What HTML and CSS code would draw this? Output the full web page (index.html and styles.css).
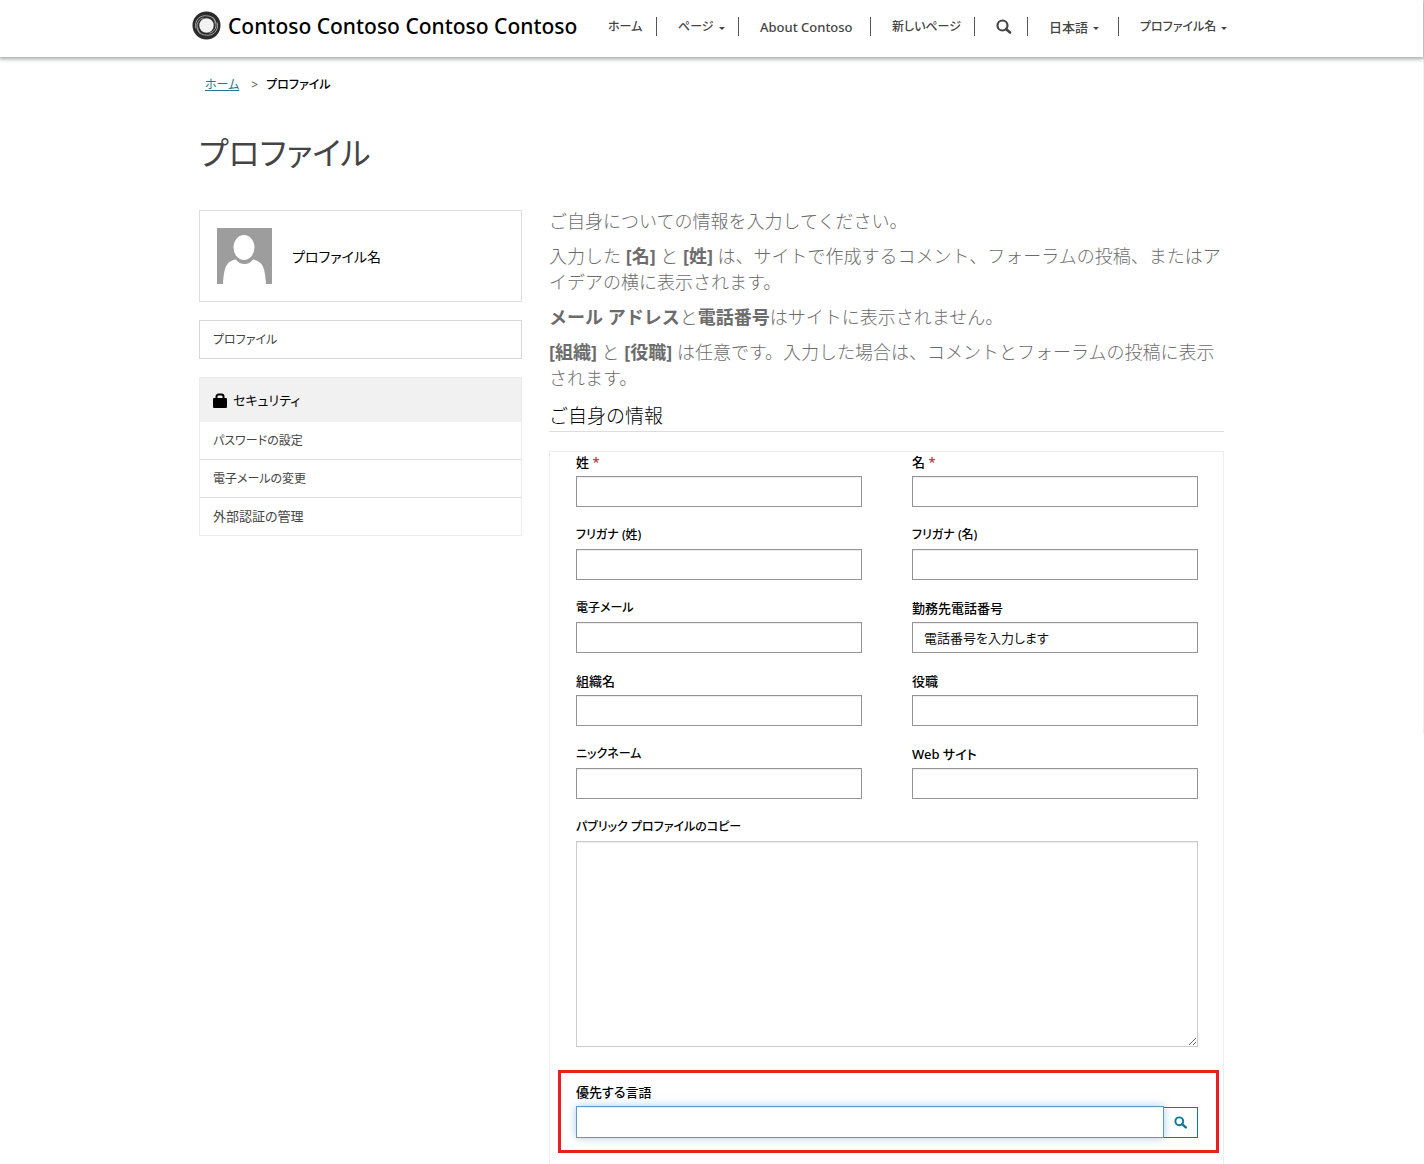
FILE: index.html
```html
<!DOCTYPE html>
<html lang="ja">
<head>
<meta charset="utf-8">
<meta name="viewport" content="width=device-width, initial-scale=1">
<title>プロファイル</title>
<link rel="stylesheet" href="styles.css">
</head>
<body>
<header class="site-header">
  <div class="header-inner">
    <a class="brand" href="#">
      <svg class="logo" viewBox="0 0 30 30" aria-hidden="true">
        <circle cx="15" cy="15" r="11" fill="#f2f2f2" stroke="#2b2b2b" stroke-width="7"/>
        <g fill="none" stroke="#a8a8a8" stroke-width="1">
          <path d="M4 18C2 9 9 4 15 5c5 0 9 3 9 8"/>
          <path d="M26 12c2 9-5 14-11 13-5 0-9-3-9-8"/>
          <path d="M9 24C3 19 4 9 12 7"/>
          <path d="M21 6c6 5 5 15-3 17"/>
        </g>
      </svg>
      <span>Contoso Contoso Contoso Contoso</span>
    </a>
    <nav aria-label="メイン">
      <ul class="nav">
        <li><a class="kana" href="#">ホーム</a></li>
        <li><a class="kana" href="#">ページ<span class="caret"></span></a></li>
        <li><a href="#">About Contoso</a></li>
        <li><a class="kana" href="#">新しいページ</a></li>
        <li><a href="#" aria-label="検索"><svg class="icon-search" viewBox="0 0 16 16" aria-hidden="true"><circle cx="6.5" cy="6.5" r="5" fill="none" stroke="currentColor" stroke-width="2.2"/><path d="M10 10l4 3.500" stroke="currentColor" stroke-width="2.600" stroke-linecap="round"/></svg></a></li>
        <li><a href="#">日本語<span class="caret"></span></a></li>
        <li><a class="kana" href="#">プロファイル名<span class="caret"></span></a></li>
      </ul>
    </nav>
  </div>
</header>

<div class="container">
  <nav class="breadcrumb kana" aria-label="パンくず">
    <a href="#">ホーム</a><span class="sep">&gt;</span><span>プロファイル</span>
  </nav>
  <h1>プロファイル</h1>

  <div class="columns">
    <aside class="sidebar">
      <div class="profile-card">
        <svg class="avatar" viewBox="0 0 55 56" aria-hidden="true">
          <rect width="55" height="56" fill="#9d9d9d"/>
          <path d="M6 56C7 40 9 33 19 31.500c4 6 13 6 17 0C46 33 48 40 49 56z" fill="#fff"/>
          <ellipse cx="27" cy="19.500" rx="11.500" ry="13.500" fill="#9d9d9d"/>
          <ellipse cx="27" cy="19.500" rx="10.500" ry="12.500" fill="#fff"/>
        </svg>
        <span>プロファイル名</span>
      </div>
      <a class="card-link kana" href="#">プロファイル</a>
      <section class="security">
        <h2><svg class="icon-lock" viewBox="0 0 14 15" aria-hidden="true"><path d="M3.500 7V3.500a2 2 0 0 1 2-2h3a2 2 0 0 1 2 2V7" fill="none" stroke="#000" stroke-width="2"/><rect y="5" width="14" height="10" rx="1" fill="#000"/></svg>セキュリティ</h2>
        <a class="kana" href="#">パスワードの設定</a>
        <a class="kana" href="#">電子メールの変更</a>
        <a href="#">外部認証の管理</a>
      </section>
    </aside>

    <main class="content">
      <div class="intro">
        <p>ご自身についての情報を入力してください。</p>
        <p>入力した <b>[名]</b> と <b>[姓]</b> は、サイトで作成するコメント、フォーラムの投稿、またはアイデアの横に表示されます。</p>
        <p><b>メール アドレス</b>と<b>電話番号</b>はサイトに表示されません。</p>
        <p><b>[組織]</b> と <b>[役職]</b> は任意です。入力した場合は、コメントとフォーラムの投稿に表示されます。</p>
      </div>
      <h2 class="form-title">ご自身の情報</h2>
      <form class="panel">
        <div class="fields">
          <div class="field"><label for="last">姓 <span class="req">*</span></label><input id="last" type="text"></div>
          <div class="field"><label for="first">名 <span class="req">*</span></label><input id="first" type="text"></div>
          <div class="field"><label class="kana" for="last-kana">フリガナ (姓)</label><input id="last-kana" type="text"></div>
          <div class="field"><label class="kana" for="first-kana">フリガナ (名)</label><input id="first-kana" type="text"></div>
          <div class="field"><label class="kana" for="email">電子メール</label><input id="email" type="email"></div>
          <div class="field"><label for="phone">勤務先電話番号</label><input id="phone" type="tel" placeholder="電話番号を入力します"></div>
          <div class="field"><label for="org">組織名</label><input id="org" type="text"></div>
          <div class="field"><label for="role">役職</label><input id="role" type="text"></div>
          <div class="field"><label class="kana" for="nick">ニックネーム</label><input id="nick" type="text"></div>
          <div class="field"><label for="web">Web サイト</label><input id="web" type="url"></div>
          <div class="field wide"><label class="kana" for="bio">パブリック プロファイルのコピー</label><textarea id="bio"></textarea></div>
        </div>
        <div class="highlight">
          <label for="language">優先する言語</label>
          <div class="lookup">
            <input id="language" type="text">
            <button type="button" aria-label="検索"><svg class="icon-small" viewBox="0 0 16 16" aria-hidden="true"><circle cx="6.500" cy="6.500" r="4.800" fill="none" stroke="currentColor" stroke-width="2.400"/><path d="M10 10l4.500 4" stroke="currentColor" stroke-width="3" stroke-linecap="round"/></svg></button>
          </div>
        </div>
      </form>
    </main>
  </div>
</div>
</body>
</html>
```
FILE: styles.css
```css
* { box-sizing: border-box; }

body {
  margin: 0;
  padding-right: 1px;
  min-height: 100vh;
  display: flex;
  flex-direction: column;
  background: linear-gradient(#efefef, #efefef) right top / 1px 734px no-repeat #fff;
  color: #000;
  font-family: "Noto Sans", "Noto Sans CJK JP", sans-serif;
  font-size: 13px;
  line-height: 20px;
  font-feature-settings: "palt";
}

a { color: inherit; text-decoration: none; }

/* Katakana-heavy labels are set one step smaller */
.kana { font-size: 12px; }

.site-header {
  height: 57px;
  background: #fff;
  box-shadow: 0 1px 4px 1px rgba(50, 60, 55, 0.45);
}

.header-inner {
  max-width: 1039px;
  margin: 0 auto;
  padding: 0 5px 6px 0;
  height: 100%;
  display: flex;
  align-items: center;
  justify-content: space-between;
}

.brand {
  display: flex;
  align-items: center;
  gap: 7px;
  font-size: 21px;
  font-weight: 500;
  line-height: 30px;
  white-space: nowrap;
}

.logo { width: 29px; height: 29px; flex: none; }

.nav {
  margin: 0;
  padding: 2px 0 0;
  list-style: none;
  display: grid;
  grid-template-columns: 70px 82px 132px 104px 53px 91px 107px;
  color: #444;
  font-weight: 500;
  white-space: nowrap;
}

.nav li {
  height: 19px;
  padding-left: 21px;
  border-right: 1px solid #555;
}

.nav li:last-child { border-right: 0; }
.nav a { display: flex; align-items: center; height: 19px; }

.caret {
  margin: 3px 0 0 5px;
  border: 3px solid transparent;
  border-top-color: currentColor;
  border-bottom: 0;
}

.icon-search { width: 16px; height: 16px; }

.container {
  width: 100%;
  max-width: 1025px;
  margin: 0 auto;
  flex: 1;
  display: flex;
  flex-direction: column;
}

.breadcrumb { display: flex; margin: 18px 0 0 6px; font-weight: 500; }
.breadcrumb a { color: #1c7a94; font-weight: 400; text-decoration: underline; }
.sep { margin: 0 8px 0 12px; color: #555; font-weight: 400; }

h1 {
  margin: 33px 0;
  color: #444;
  font-size: 32px;
  line-height: 50px;
  font-weight: 400;
}

.columns {
  flex: 1;
  display: grid;
  grid-template-columns: 323fr 675fr;
  gap: 27px;
}

.sidebar { color: #444; line-height: 19px; margin-top: -1px; }

.profile-card {
  display: flex;
  align-items: center;
  gap: 20px;
  height: 92px;
  padding: 0 17px;
  border: 1px solid #ddd;
  color: #000;
  font-size: 14px;
}

.avatar { width: 55px; height: 56px; }

.card-link {
  display: block;
  margin: 18px 0;
  padding: 9px 13px;
  border: 1px solid #d8d8d8;
}

.security { border: 1px solid #ececec; }

.security h2 {
  display: flex;
  align-items: center;
  gap: 6px;
  margin: 0;
  padding: 0 13px;
  height: 44px;
  background: #f1f1f1;
  color: #000;
  font-size: 13px;
  font-weight: 400;
}

.icon-lock { width: 14px; height: 15px; }
.security a { display: block; padding: 9px 13px; }
.security a + a { border-top: 1px solid #ddd; }

.content { display: flex; flex-direction: column; }

.intro {
  margin-top: -3px;
  color: #6c6c6c;
  font-size: 18px;
  line-height: 26px;
  font-weight: 300;
  font-feature-settings: normal;
  line-break: strict;
}

.intro p { margin: 0 0 9px; }
.intro b { font-weight: 700; }

.form-title {
  margin: 0 0 19px;
  padding-top: 2px;
  border-bottom: 1px solid #ddd;
  font-size: 19px;
  line-height: 29px;
  font-weight: 300;
  font-feature-settings: normal;
}

.panel {
  flex: 1;
  padding: 0 25px 11px 26px;
  border: 1px solid #eee;
  border-bottom: 0;
}

.fields { display: grid; grid-template-columns: 1fr 1fr; gap: 18px 50px; }
.field { display: flex; flex-direction: column; }
.wide { grid-column: 1 / -1; }
label { display: block; font-weight: 500; margin-bottom: 4px; }
.req { color: #a33; }

input, textarea {
  width: 100%;
  height: 31px;
  margin: 0;
  padding: 0 11px;
  border: 1px solid #949494;
  border-radius: 0;
  background: #fff;
  box-shadow: inset 0 1px 1px rgba(0, 0, 0, 0.075);
  font: inherit;
  font-feature-settings: inherit;
}

input::placeholder { color: #111; opacity: 1; }
textarea { display: block; height: 206px; border-color: #ccc; resize: both; }

.highlight {
  margin: 23px -21px 0 -18px;
  padding: 9px 18px 12px 15px;
  border: 3px solid #ed1c24;
}

.lookup { display: flex; align-items: flex-end; }

.lookup input {
  flex: 1;
  height: 32px;
  border-color: #5e97ca;
  box-shadow: inset 0 1px 1px rgba(0, 0, 0, 0.075), 0 0 8px rgba(102, 175, 233, 0.6);
}

.lookup button {
  display: flex;
  align-items: center;
  justify-content: center;
  width: 34px;
  height: 31px;
  padding: 0;
  border: 1px solid #137a96;
  border-left: 0;
  background: transparent;
  color: #0f7b93;
}

.icon-small { width: 13px; height: 13px; }
```
